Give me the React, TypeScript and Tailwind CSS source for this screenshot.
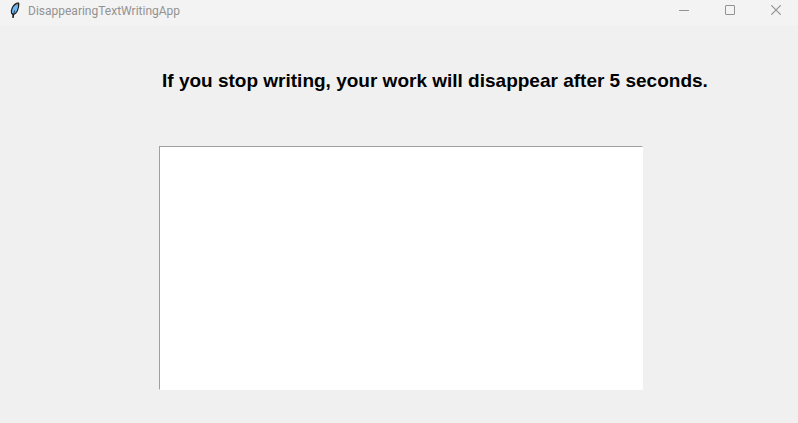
function FeatherIcon() {
  return (
    <svg width="16" height="18" viewBox="0 0 16 18" aria-hidden="true">
      <path d="M7 2.6 L9 1.6 L11 1.6 L11.4 3 L11 6.5 L9.8 10.2 L8 12.8 L6.2 13.8 L5.6 17 L4.4 17 L4.4 14 L3 12.6 L2.8 9.4 L4 6 L5.6 3.8 Z" fill="#1a1d22" />
      <path d="M9.8 2.8 L10 5.8 L8.8 9.8 L7 12.2 L5.4 12.8 L4 11.8 L4 9.4 L5.1 6.4 L7 4.2 Z" fill="#6db8f5" />
      <path d="M9.4 2.6 L8.4 4.4" stroke="#a8835c" strokeWidth="1" />
      <path d="M6.6 9.5 L5 16.5" fill="none" stroke="#1a1d22" strokeWidth="0.8" />
    </svg>
  );
}

function TitleBar() {
  const control = "flex h-5 w-[46px] items-center justify-center pl-0.5";
  return (
    <header className="flex h-[26px] items-start bg-[#f3f3f3] pl-2 text-[#929292]">
      <div className="flex h-5 flex-1 items-center gap-1">
        <FeatherIcon />
        <span className="pt-0.5 font-['Roboto','Open_Sans',sans-serif] text-[12px] leading-5">
          DisappearingTextWritingApp
        </span>
      </div>
      <button type="button" aria-label="Minimize" className={control}>
        <svg width="10" height="10" viewBox="0 0 10 10" fill="none" stroke="currentColor">
          <path d="M0 5.5H10" />
        </svg>
      </button>
      <button type="button" aria-label="Maximize" className={control}>
        <svg width="10" height="10" viewBox="0 0 10 10" fill="none" stroke="currentColor">
          <rect x="0.5" y="0.5" width="9" height="9" rx="0.5" />
        </svg>
      </button>
      <button type="button" aria-label="Close" className={control}>
        <svg width="10" height="10" viewBox="0 0 10 10" fill="none" stroke="currentColor" strokeWidth="1.2">
          <path d="M0.3 0.3L9.7 9.7M9.7 0.3L0.3 9.7" />
        </svg>
      </button>
    </header>
  );
}

export default function App() {
  return (
    <div className="flex min-h-screen flex-col bg-[#f0f0f0]">
      <TitleBar />
      <main className="flex flex-col gap-[53px] pt-[43px] pr-[155px] pb-8 pl-[159px]">
        <label
          htmlFor="writing"
          className="pl-[3px] font-['Liberation_Sans',Arial,sans-serif] text-[19px] leading-6 font-bold whitespace-nowrap text-black"
        >
          If you stop writing, your work will disappear after 5 seconds.
        </label>
        <textarea
          id="writing"
          className="block h-[244px] w-full resize-none border border-t-[#a0a0a0] border-r-white border-b-white border-l-[#a0a0a0] bg-white p-1 font-['Liberation_Sans',Arial,sans-serif] text-[19px] leading-6 text-black outline-none"
        />
      </main>
    </div>
  );
}
